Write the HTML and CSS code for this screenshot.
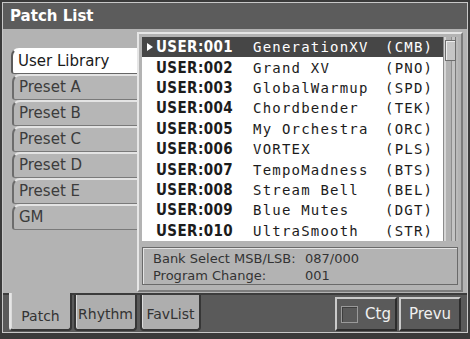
FILE: index.html
```html
<!DOCTYPE html>
<html lang="en">
<head>
    <meta charset="UTF-8">
    <meta name="viewport" content="width=device-width, initial-scale=1.0">
    <title>Patch List</title>
    <link rel="stylesheet" href="styles.css">
</head>
<body>
    <div class="window">
        <div class="inner">
            <div class="titlebar">Patch List</div>

            <div class="main">
                <div class="banks">
                    <div class="bank active">User Library</div>
                    <div class="bank">Preset A</div>
                    <div class="bank">Preset B</div>
                    <div class="bank">Preset C</div>
                    <div class="bank">Preset D</div>
                    <div class="bank">Preset E</div>
                    <div class="bank">GM</div>
                </div>

                <div class="panel">
                    <div class="list-wrap">
                        <div class="list">
                            <div class="row selected">
                                <span class="mark"><svg width="6" height="8" viewBox="0 0 6 8"><polygon points="0,0 6,4 0,8" fill="#fff"/></svg></span>
                                <span class="num">USER:001</span><span class="name">GenerationXV</span><span class="cat">(CMB)</span>
                            </div>
                            <div class="row"><span class="mark"></span><span class="num">USER:002</span><span class="name">Grand XV</span><span class="cat">(PNO)</span></div>
                            <div class="row"><span class="mark"></span><span class="num">USER:003</span><span class="name">GlobalWarmup</span><span class="cat">(SPD)</span></div>
                            <div class="row"><span class="mark"></span><span class="num">USER:004</span><span class="name">Chordbender</span><span class="cat">(TEK)</span></div>
                            <div class="row"><span class="mark"></span><span class="num">USER:005</span><span class="name">My Orchestra</span><span class="cat">(ORC)</span></div>
                            <div class="row"><span class="mark"></span><span class="num">USER:006</span><span class="name">VORTEX</span><span class="cat">(PLS)</span></div>
                            <div class="row"><span class="mark"></span><span class="num">USER:007</span><span class="name">TempoMadness</span><span class="cat">(BTS)</span></div>
                            <div class="row"><span class="mark"></span><span class="num">USER:008</span><span class="name">Stream Bell</span><span class="cat">(BEL)</span></div>
                            <div class="row"><span class="mark"></span><span class="num">USER:009</span><span class="name">Blue Mutes</span><span class="cat">(DGT)</span></div>
                            <div class="row"><span class="mark"></span><span class="num">USER:010</span><span class="name">UltraSmooth</span><span class="cat">(STR)</span></div>
                        </div>
                        <div class="scrollbar"><div class="thumb"></div></div>
                    </div>

                    <div class="info">
                        <span>Bank Select MSB/LSB:</span><span>087/000</span>
                        <span>Program Change:</span><span>001</span>
                    </div>
                </div>
            </div>

            <div class="footer">
                <div class="ftab active">Patch</div>
                <div class="ftab">Rhythm</div>
                <div class="ftab">FavList</div>
                <div class="spacer"></div>
                <div class="btn"><span class="check"></span>Ctg</div>
                <div class="btn">Prevu</div>
            </div>
        </div>
    </div>
</body>
</html>
```

FILE: styles.css
```css
body {
    margin: 0;
    background-color: #3a3a3a;
    font-family: "DejaVu Sans", sans-serif;
}
.window {
    width: 470px;
    height: 339px;
    box-sizing: border-box;
    padding: 2px 2px 6px 2px;
    background-color: #3a3a3a;
}
.inner {
    height: 100%;
    box-sizing: border-box;
    border: 1px solid #c8c8c8;
    display: flex;
    flex-direction: column;
}
.titlebar {
    height: 26px;
    flex: none;
    background-color: #5c5c5c;
    color: #fff;
    font-weight: bold;
    font-size: 15px;
    line-height: 27px;
    padding-left: 7px;
}
.main {
    height: 264px;
    flex: none;
    box-sizing: border-box;
    background-color: #b3b3b3;
    display: flex;
    padding: 3px 4px 1px 8px;
}

/* bank tabs on the left */
.banks {
    width: 126px;
    margin-top: 16px;
    display: flex;
    flex-direction: column;
}
.bank {
    height: 26px;
    box-sizing: border-box;
    margin-left: 1px;
    background-color: #b6b6b6;
    border-top: 2px solid #e4e4e4;
    border-left: 2px solid #6c6c6c;
    border-bottom: 1px solid #7a7a7a;
    border-top-left-radius: 8px;
    border-bottom-left-radius: 3px;
    color: #3c3c3c;
    font-size: 15px;
    line-height: 22px;
    padding-left: 5px;
}
.bank.active {
    margin-left: 0;
    background-color: #fff;
    color: #1a1a1a;
    border-top-color: #fff;
    border-left-color: #5a5a5a;
    border-bottom-color: #666;
}

/* list panel */
.panel {
    flex: 1;
    box-sizing: border-box;
    border: 2px solid #e6e6e6;
    border-right-color: #7c7c7c;
    border-bottom-color: #7c7c7c;
    padding: 3px 3px 5px 3px;
    display: flex;
    flex-direction: column;
}
.list-wrap {
    height: 204px;
    display: flex;
}
.list {
    flex: 1;
    background-color: #fff;
}
.row {
    height: 20.4px;
    display: grid;
    grid-template-columns: 14px 97px 132px auto;
    align-items: center;
    color: #1c1c1c;
}
.row.selected {
    background-color: #464646;
    color: #fff;
}
.mark {
    display: flex;
    justify-content: center;
    padding-left: 2px;
}
.num {
    font-family: "DejaVu Sans Condensed", "DejaVu Sans", sans-serif;
    font-stretch: condensed;
    font-weight: bold;
    font-size: 15px;
    letter-spacing: 0.4px;
}
.name, .cat {
    font-family: "DejaVu Sans Mono", monospace;
    font-size: 14px;
    letter-spacing: 1.2px;
}
.scrollbar {
    width: 15px;
    box-sizing: border-box;
    padding: 3px 2px 0 2px;
    background: linear-gradient(to right, #8c8c8c 0 1px, #d6d6d6 1px 3px, #b2b2b2 3px 8px, #8e8e8e 8px 9px, #c4c4c4 9px 12px, #7a7a7a 12px 13px, #bababa 13px);
}
.thumb {
    height: 21px;
    box-sizing: border-box;
    background-color: #c6c6c6;
    border: 1px solid #6e6e6e;
    box-shadow: inset 1px 1px 0 #eee;
}
.info {
    margin-top: 6px;
    height: 38px;
    box-sizing: border-box;
    border: 1px solid #6a6a6a;
    box-shadow: inset 1px 1px 0 #e4e4e4;
    padding: 3px 0 0 10px;
    display: grid;
    grid-template-columns: 152px auto;
    font-size: 13px;
    line-height: 15px;
    color: #333;
}

/* bottom bar */
.footer {
    height: 39px;
    flex: none;
    box-sizing: border-box;
    background-color: #5a5a5a;
    box-shadow: inset 0 2px 0 #3c3c3c;
    display: flex;
    gap: 2px;
    padding: 0 6px 1px 6px;
}
.ftab {
    width: 63px;
    box-sizing: border-box;
    margin-top: 2px;
    background-color: #aeaeae;
    border: 2px solid #363636;
    border-top: none;
    border-bottom-left-radius: 4px;
    border-bottom-right-radius: 4px;
    box-shadow: inset 1px 0 0 #dcdcdc;
    color: #333;
    font-size: 14px;
    display: flex;
    align-items: center;
    justify-content: center;
    padding-top: 4px;
}
.ftab.active {
    margin-top: 0;
    background-color: #b3b3b3;
    border-left-color: #e6e6e6;
    padding-top: 9px;
}
.ftab:nth-child(3) {
    width: 61px;
    margin-left: 1px;
}
.spacer {
    flex: 1;
}
.btn {
    width: 62px;
    box-sizing: border-box;
    margin-top: 4px;
    border: 2px solid #cacaca;
    border-right-color: #2c2c2c;
    border-bottom-color: #2c2c2c;
    color: #f0f0f0;
    font-size: 15px;
    display: flex;
    align-items: center;
    justify-content: center;
    gap: 7px;
}
.check {
    width: 17px;
    height: 17px;
    box-sizing: border-box;
    border: 1px solid #9a9a9a;
    box-shadow: inset 1px 1px 0 #3e3e3e;
}
```
